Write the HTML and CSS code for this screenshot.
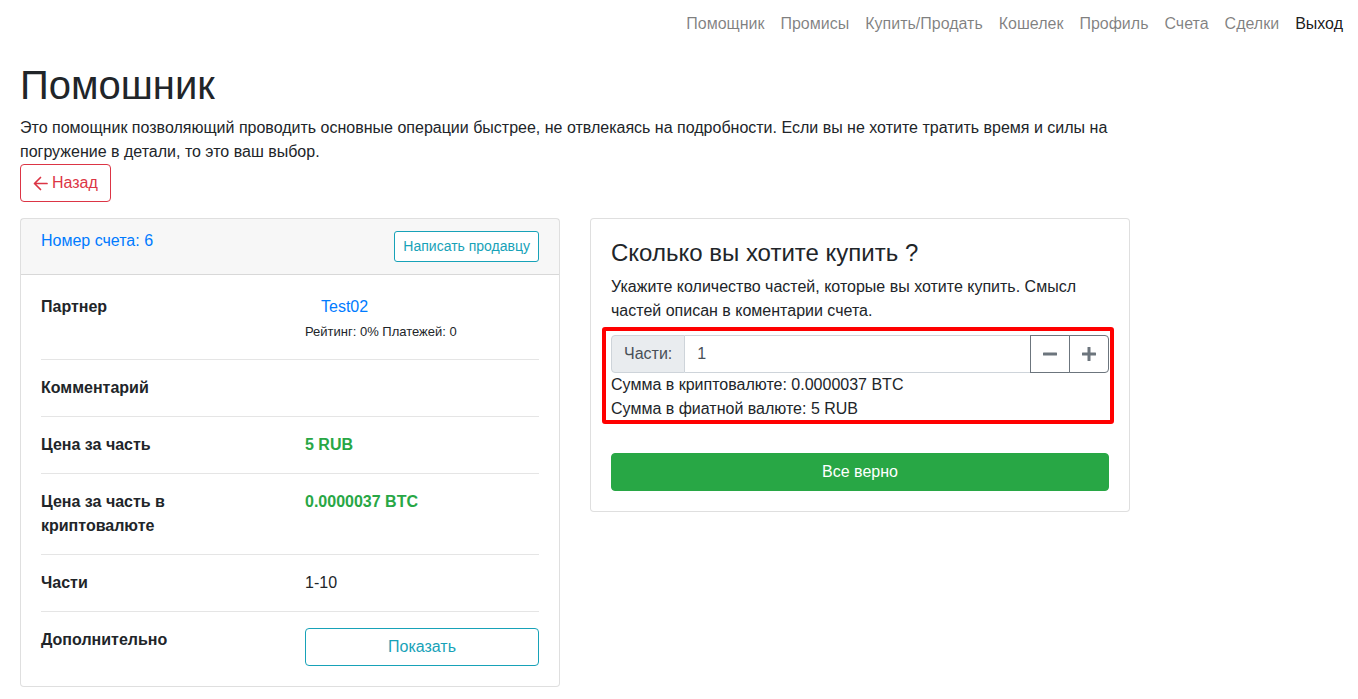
FILE: index.html
```html
<!DOCTYPE html>
<html lang="ru">
<head>
<meta charset="utf-8">
<title>Помошник</title>
<link rel="stylesheet" href="styles.css">
</head>
<body>
<nav class="topnav">
  <a class="nav-link" href="#">Помощник</a>
  <a class="nav-link" href="#">Промисы</a>
  <a class="nav-link" href="#">Купить/Продать</a>
  <a class="nav-link" href="#">Кошелек</a>
  <a class="nav-link" href="#">Профиль</a>
  <a class="nav-link" href="#">Счета</a>
  <a class="nav-link" href="#">Сделки</a>
  <a class="nav-link nav-link-dark" href="#">Выход</a>
</nav>
<main class="page">
  <h1 class="title">Помошник</h1>
  <p class="intro">Это помощник позволяющий проводить основные операции быстрее, не отвлекаясь на подробности. Если вы не хотите тратить время и силы на погружение в детали, то это ваш выбор.</p>
  <a class="btn btn-outline-danger back-btn" href="#"><svg class="arrow" width="15" height="15" viewBox="0 0 15 15"><path d="M14 7.5H1.5M7.5 1.5L1.5 7.5L7.5 13.5" fill="none" stroke="currentColor" stroke-width="1.7" stroke-linecap="round" stroke-linejoin="round"/></svg>Назад</a>

  <div class="cols">
    <section class="card">
      <div class="card-header">
        <span class="account">Номер счета: 6</span>
        <a class="btn btn-sm btn-outline-info" href="#">Написать продавцу</a>
      </div>
      <div class="card-body">
        <div class="info-row">
          <div class="label">Партнер</div>
          <div class="value">
            <a class="partner" href="#">Test02</a>
            <div class="rating">Рейтинг: 0% Платежей: 0</div>
          </div>
        </div>
        <div class="info-row">
          <div class="label">Комментарий</div>
          <div class="value"></div>
        </div>
        <div class="info-row">
          <div class="label">Цена за часть</div>
          <div class="value price">5 RUB</div>
        </div>
        <div class="info-row">
          <div class="label">Цена за часть в криптовалюте</div>
          <div class="value price">0.0000037 BTC</div>
        </div>
        <div class="info-row">
          <div class="label">Части</div>
          <div class="value">1-10</div>
        </div>
        <div class="info-row">
          <div class="label">Дополнительно</div>
          <div class="value"><a class="btn btn-outline-info btn-block" href="#">Показать</a></div>
        </div>
      </div>
    </section>

    <section class="card">
      <div class="card-body">
        <h4 class="card-title">Сколько вы хотите купить ?</h4>
        <p class="card-text">Укажите количество частей, которые вы хотите купить. Смысл частей описан в коментарии счета.</p>
        <div class="qty-box">
          <div class="input-group">
            <span class="input-group-text">Части:</span>
            <input class="form-control" type="text" value="1">
            <button class="btn-step" type="button"><svg width="14" height="14" viewBox="0 0 14 14"><rect x="0" y="5.5" width="14" height="3" rx="0.5" fill="currentColor"/></svg></button>
            <button class="btn-step btn-step-last" type="button"><svg width="14" height="14" viewBox="0 0 14 14"><rect x="0" y="5.5" width="14" height="3" rx="0.5" fill="currentColor"/><rect x="5.5" y="0" width="3" height="14" rx="0.5" fill="currentColor"/></svg></button>
          </div>
          <div class="sum">Сумма в криптовалюте: 0.0000037 BTC</div>
          <div class="sum">Сумма в фиатной валюте: 5 RUB</div>
          <div class="highlight"></div>
        </div>
        <a class="btn btn-success btn-block confirm" href="#">Все верно</a>
      </div>
    </section>
  </div>
</main>
</body>
</html>
```

FILE: styles.css
```css
* { box-sizing: border-box; }

body {
  margin: 0;
  font-family: "Liberation Sans", Arial, sans-serif;
  font-size: 16px;
  line-height: 1.5;
  color: #212529;
  background: #fff;
}

a { text-decoration: none; }

.topnav {
  display: flex;
  justify-content: flex-end;
  padding: 12px 7px 0 0;
  height: 56px;
}

.nav-link {
  padding: 0 8px;
  color: rgba(0, 0, 0, 0.5);
  line-height: 24px;
}

.nav-link-dark { color: rgba(0, 0, 0, 0.9); }

.page {
  padding: 0 20px;
  width: 1150px;
}

.title {
  margin: 5px 0 7px;
  font-size: 40px;
  font-weight: 500;
  line-height: 1.2;
}

.intro {
  margin: 0;
  width: 1110px;
}

.btn {
  display: inline-flex;
  align-items: center;
  justify-content: center;
  padding: 6px 12px;
  border: 1px solid transparent;
  border-radius: 4px;
  font-size: 16px;
  line-height: 24px;
  background: #fff;
}

.btn-outline-danger {
  color: #dc3545;
  border-color: #dc3545;
}

.back-btn .arrow {
  margin-right: 4px;
}

.btn-outline-info {
  color: #17a2b8;
  border-color: #17a2b8;
}

.btn-sm {
  padding: 4px 8px;
  font-size: 14px;
  line-height: 21px;
  border-radius: 3px;
}

.btn-block {
  display: flex;
  width: 100%;
}

.btn-success {
  color: #fff;
  background: #28a745;
  border-color: #28a745;
}

.cols {
  display: grid;
  grid-template-columns: 540px 540px;
  column-gap: 30px;
  align-items: start;
  margin-top: 16px;
}

.card {
  border: 1px solid rgba(0, 0, 0, 0.125);
  border-radius: 4px;
  background: #fff;
}

.card-header {
  display: flex;
  justify-content: space-between;
  align-items: flex-start;
  padding: 12px 20px;
  background: rgba(0, 0, 0, 0.03);
  border-bottom: 1px solid rgba(0, 0, 0, 0.125);
}

.account {
  color: #007bff;
  margin-top: -2px;
}

.card-body {
  padding: 20px;
}

.info-row {
  display: grid;
  grid-template-columns: 234px 234px;
  column-gap: 30px;
  padding: 16px 0;
  border-top: 1px solid rgba(0, 0, 0, 0.1);
}

.info-row:first-child {
  padding-top: 0;
  border-top: 0;
}

.info-row:last-child {
  padding-bottom: 0;
}

.label {
  font-weight: 700;
}

.price {
  color: #28a745;
  font-weight: 700;
}

.partner {
  display: block;
  padding-left: 16px;
  color: #007bff;
}

.rating {
  font-size: 13px;
  line-height: 23px;
  padding-top: 1px;
}

.card-title {
  margin: 0 0 7px;
  font-size: 24px;
  font-weight: 500;
  line-height: 1.2;
}

.card-text {
  margin: 0;
}

.qty-box {
  position: relative;
  margin-top: 12px;
}

.highlight {
  position: absolute;
  left: -9px;
  top: -8px;
  right: -5px;
  bottom: -3px;
  border: 4px solid #ff0000;
  border-radius: 3px;
  pointer-events: none;
}

.input-group {
  display: flex;
  height: 38px;
}

.input-group-text {
  display: flex;
  align-items: center;
  padding: 6px 12px;
  color: #495057;
  background: #e9ecef;
  border: 1px solid #ced4da;
  border-radius: 4px 0 0 4px;
}

.form-control {
  flex: 1;
  min-width: 0;
  padding: 6px 12px;
  font-family: inherit;
  font-size: 16px;
  line-height: 24px;
  color: #495057;
  border: 1px solid #ced4da;
  border-left: 0;
  border-right: 0;
  outline: none;
}

.btn-step {
  width: 40px;
  display: flex;
  align-items: center;
  justify-content: center;
  padding: 0;
  color: #6c757d;
  background: #fff;
  border: 1px solid #6c757d;
}

.btn-step + .btn-step {
  margin-left: -1px;
}

.btn-step-last {
  border-radius: 0 4px 4px 0;
}

.confirm {
  margin-top: 32px;
}
```
